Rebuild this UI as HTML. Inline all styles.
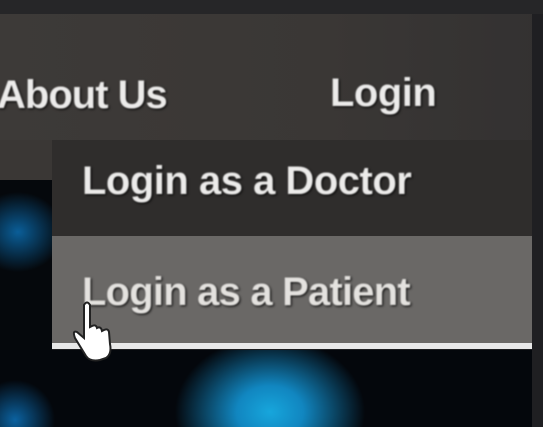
<!DOCTYPE html>
<html><head><style>
html,body{margin:0;padding:0;width:543px;height:427px;overflow:hidden;background:#1c1c1e;}
#w{position:relative;width:543px;height:427px;overflow:hidden;}
.a{position:absolute;}
.t{font-family:"Liberation Sans",sans-serif;font-weight:bold;color:#ecebea;white-space:nowrap;filter:blur(0.8px);text-shadow:1px 1px 2px #000;}
</style></head><body><div id="w">
<div class="a" style="left:0;top:0;width:543px;height:14px;background:#262628"></div>
<div class="a" style="left:0;top:14px;width:543px;height:126px;background:linear-gradient(90deg,#3d3a38,#3a3735 60%,#333131)"></div>
<div class="a" style="left:532px;top:14px;width:11px;height:413px;background:#1f1f22"></div>
<div class="a" style="left:0;top:140px;width:52px;height:40px;background:#3a3735"></div>
<div class="a" style="left:0;top:180px;width:52px;height:170px;background:radial-gradient(ellipse 45px 40px at 18px 232px,#0a5e98,#05080c 100%) ,#05080c;background:radial-gradient(ellipse 45px 40px at 18px 52px,#0a5e98,#05080c)"></div>
<div class="a" style="left:0;top:350px;width:532px;height:77px;background:radial-gradient(ellipse 95px 75px at 270px 62px,#17a6dc 0%,#1186c0 35%,#04070c 100%),#04070c"></div>
<div class="a" style="left:0;top:350px;width:80px;height:77px;background:radial-gradient(ellipse 40px 40px at 15px 70px,#0b62a0,rgba(4,7,12,0))"></div>
<div class="a" style="left:52px;top:140px;width:480px;height:96px;background:#2f2d2c"></div>
<div class="a" style="left:52px;top:236px;width:480px;height:107px;background:#6a6866"></div>
<div class="a" style="left:52px;top:343px;width:480px;height:6px;background:#e8e8e8"></div>
<div class="a t" style="left:-3px;top:72px;font-size:40px;line-height:46px;letter-spacing:-1px">About Us</div>
<div class="a t" style="left:330px;top:70px;font-size:40px;line-height:46px;letter-spacing:-0.5px">Login</div>
<div class="a t" style="left:82px;top:158px;font-size:40px;line-height:46px;letter-spacing:-0.5px">Login as a Doctor</div>
<div class="a t" style="left:82px;top:269px;font-size:40px;line-height:46px;letter-spacing:-0.8px;color:#e4e2df">Login as a Patient</div>
<svg class="a" style="left:72px;top:300px" width="45" height="65" viewBox="0 0 45 65">
<path d="M12 5 L12 38 L5 32 Q0 30 3 38 L14 56 Q18 62 28 60 L34 58 Q40 54 38 44 L37 32 Q36 28 32 30 L30 31 Q29 26 25 28 Q24 24 20 26 L18 27 L18 5 Q15 0 12 5Z" fill="#fff" stroke="#222" stroke-width="2"/>
</svg>
</div></body></html>
